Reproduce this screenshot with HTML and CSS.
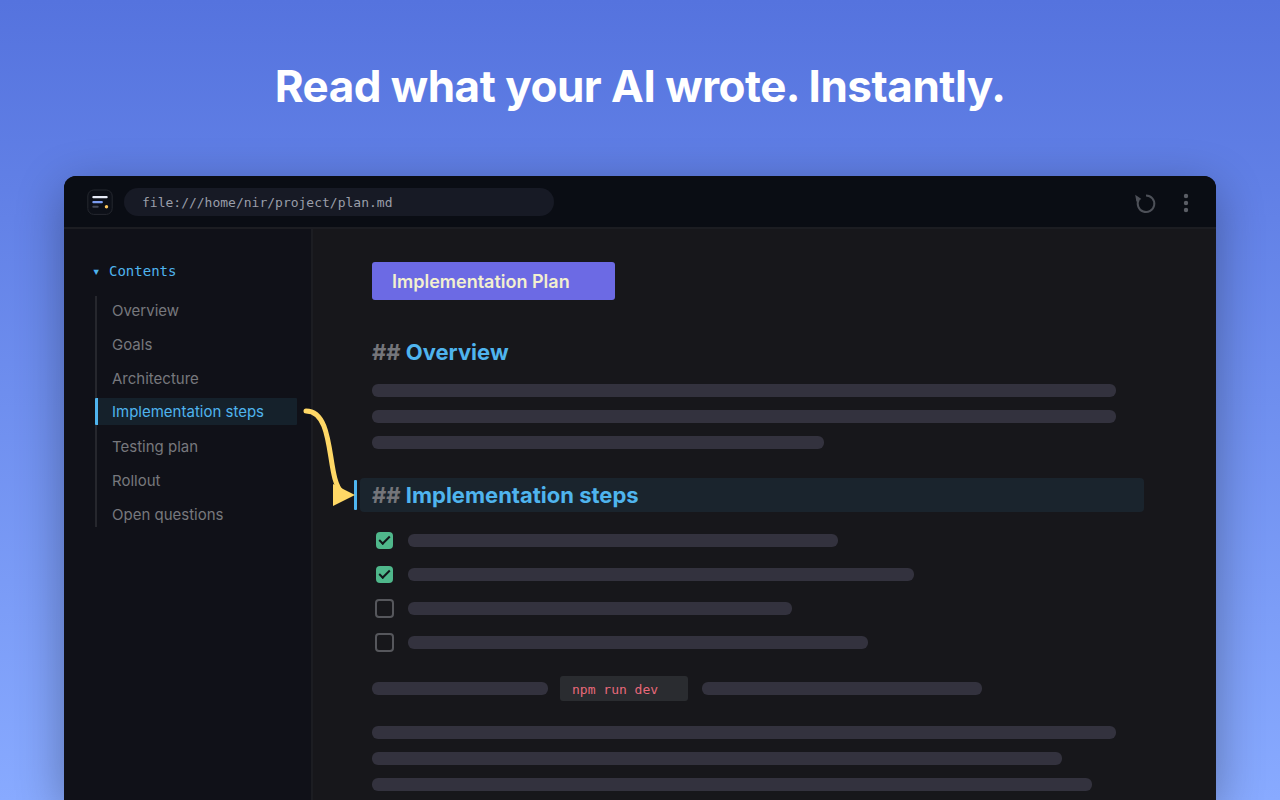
FILE: index.html
```html
<!DOCTYPE html>
<html lang="en">

<head>
    <meta charset="utf-8">
    <title>Read what your AI wrote</title>
    <link rel="stylesheet" href="styles.css">
</head>

<body>
    <h1 class="headline">Read what your AI wrote. Instantly.</h1>
    <div class="window">
        <div class="toolbar">
            <svg class="logo" viewBox="0 0 26 26" width="26" height="26" aria-hidden="true">
                <rect x="0.8" y="1" width="24.4" height="24.4" rx="6" fill="#0d1018" stroke="#25282f" />
                <rect x="5.3" y="7" width="15.4" height="2.2" rx="1" fill="#e8ecf8" />
                <rect x="5.3" y="12" width="10.6" height="2.2" rx="1" fill="#7c9cf0" />
                <rect x="5.3" y="16.8" width="6.4" height="2" rx="1" fill="#454a58" />
                <circle cx="19.5" cy="17.7" r="1.7" fill="#ffc95c" />
            </svg>
            <input type="text" class="address" aria-label="Address" value="file:///home/nir/project/plan.md">
            <button type="button" class="icon-button reload" aria-label="Reload">
                <svg viewBox="0 0 24 24" width="24" height="24">
                    <path d="M12 5.4A8.3 8.3 0 1 1 4.8 9.6" fill="none" stroke="#4d5058" stroke-width="2" />
                    <path d="M1.2 4.8L7.4 9L2.4 11.8Z" fill="#4d5058" />
                </svg>
            </button>
            <button type="button" class="icon-button" aria-label="Menu">
                <svg viewBox="0 0 24 24" width="24" height="24" fill="#5b5e66">
                    <circle cx="12" cy="6" r="2.2" />
                    <circle cx="12" cy="13" r="2.2" />
                    <circle cx="12" cy="20" r="2.2" />
                </svg>
            </button>
        </div>
        <div class="workspace">
            <nav class="sidebar">
                <div class="toc-title"><span class="toc-arrow">▾</span>Contents</div>
                <ul class="toc">
                    <li><a href="#overview">Overview</a></li>
                    <li><a href="#goals">Goals</a></li>
                    <li><a href="#architecture">Architecture</a></li>
                    <li><a href="#steps" class="active">Implementation steps</a></li>
                    <li><a href="#testing">Testing plan</a></li>
                    <li><a href="#rollout">Rollout</a></li>
                    <li><a href="#questions">Open questions</a></li>
                </ul>
            </nav>
            <main class="document">
                <div class="doc-title">Implementation Plan</div>

                <h2 id="overview"><span class="hash">##</span> Overview</h2>
                <div class="paragraph">
                    <div class="bar"></div>
                    <div class="bar"></div>
                    <div class="bar" style="width: 452px"></div>
                </div>

                <h2 id="steps" class="current"><span class="hash">##</span> Implementation steps</h2>
                <ul class="tasks">
                    <li><input type="checkbox" aria-label="Step 1" checked><div class="bar" style="width: 430px"></div></li>
                    <li><input type="checkbox" aria-label="Step 2" checked><div class="bar" style="width: 506px"></div></li>
                    <li><input type="checkbox" aria-label="Step 3"><div class="bar" style="width: 384px"></div></li>
                    <li><input type="checkbox" aria-label="Step 4"><div class="bar" style="width: 460px"></div></li>
                </ul>

                <div class="code-line">
                    <div class="bar" style="width: 176px"></div>
                    <code>npm run dev</code>
                    <div class="bar" style="width: 280px"></div>
                </div>
                <div class="paragraph">
                    <div class="bar"></div>
                    <div class="bar" style="width: 690px"></div>
                    <div class="bar" style="width: 720px"></div>
                </div>
            </main>
            <!-- arrow from the active entry to its heading -->
            <svg class="connector" viewBox="0 0 60 110" width="60" height="110" aria-hidden="true">
                <path d="M6 11C36 11 26 80 42 92" fill="none" stroke="#ffd866" stroke-width="5" stroke-linecap="round" />
                <path d="M33 84L55 95L33 106Z" fill="#ffd866" />
            </svg>
        </div>
    </div>
</body>

</html>
```
FILE: styles.css
```css
*,
*::before {
    box-sizing: border-box;
}

body {
    display: flex;
    flex-direction: column;
    min-height: 100vh;
    margin: 0;
    padding: 0 64px;
    font-family: Inter, sans-serif;
    background: linear-gradient(#5573de, #88aaff);
}

ul {
    list-style: none;
    margin: 0;
    padding: 0;
}

.headline {
    margin: 0;
    padding: 56px 0 60px;
    font-size: 44px;
    line-height: 60px;
    font-weight: 700;
    letter-spacing: -0.5px;
    text-align: center;
    color: #fff;
}

.window {
    display: flex;
    flex-direction: column;
    flex: 1;
    border-radius: 12px 12px 0 0;
    background-color: #17171b;
    box-shadow: 0 12px 48px rgba(0, 0, 0, 0.32);
}

/* toolbar */
.toolbar {
    display: flex;
    align-items: center;
    height: 53px;
    padding: 1px 18px 0 23px;
    border-bottom: 2px solid #1c1d22;
    border-radius: 12px 12px 0 0;
    background-color: #0a0d14;
}

.address {
    width: 430px;
    height: 28px;
    margin: 0 auto 0 11px;
    padding: 1px 18px 0;
    border: none;
    border-radius: 14px;
    background-color: #171a25;
    color: #9a9ea9;
    font-family: "DejaVu Sans Mono", monospace;
    font-size: 13px;
}

.icon-button {
    display: flex;
    padding: 0;
    border: none;
    background: none;
    cursor: pointer;
}

.reload {
    margin-right: 16px;
}

/* sidebar */
.workspace {
    position: relative;
    display: flex;
    flex: 1;
}

.sidebar {
    flex: none;
    width: 249px;
    padding: 32px 14px 0 28px;
    border-right: 2px solid #1c1d22;
    background-color: #101118;
}

.toc-title {
    display: flex;
    margin-bottom: 15px;
    font-family: "DejaVu Sans Mono", monospace;
    font-size: 14px;
    line-height: 20px;
    color: #4fb4ee;
}

.toc-arrow {
    width: 17px;
}

.toc {
    display: flex;
    flex-direction: column;
    gap: 7px;
    margin-left: 3px;
    box-shadow: inset 2px 0 #26272d;
}

.toc a {
    display: block;
    padding: 2px 0 0 17px;
    font-size: 15px;
    line-height: 25px;
    color: #77787d;
    text-decoration: none;
}

.toc a.active {
    padding: 0 0 0 14px;
    border-left: 3px solid #4fb4ee;
    border-radius: 1px;
    background-color: #15212b;
    color: #4fb4ee;
    line-height: 27px;
}

/* document */
.document {
    flex: 1;
    padding: 33px 100px 9px 59px;
}

.doc-title {
    width: 243px;
    padding: 2px 0 0 20px;
    border-radius: 3px;
    background-color: #6c6ae4;
    color: #f3f0cf;
    font-size: 18px;
    line-height: 36px;
    font-weight: 600;
}

h2 {
    position: relative;
    margin: 35px 0 15px;
    font-size: 22px;
    line-height: 34px;
    font-weight: 700;
    color: #4fb4ee;
}

.hash {
    color: #74757a;
}

h2.current {
    margin: 29px -28px 19px -12px;
    padding-left: 12px;
    border-radius: 4px;
    background-color: #1a242d;
}

h2.current::before {
    content: "";
    position: absolute;
    top: 2px;
    bottom: 2px;
    left: -6px;
    width: 3px;
    border-radius: 1px;
    background-color: #4fb4ee;
}

.bar {
    height: 13px;
    max-width: 100%;
    border-radius: 6px;
    background-color: #33323e;
}

.paragraph {
    display: flex;
    flex-direction: column;
    gap: 13px;
}

.tasks {
    display: flex;
    flex-direction: column;
    gap: 15px;
    margin-left: 3px;
}

.tasks li {
    display: flex;
    align-items: center;
    gap: 14px;
}

.tasks input {
    appearance: none;
    position: relative;
    flex: none;
    width: 19px;
    height: 19px;
    margin: 0;
    border: 2px solid #56575c;
    border-radius: 4px;
}

.tasks input:checked {
    width: 17px;
    height: 17px;
    margin: 1px;
    border: none;
    background-color: #4fb78b;
}

.tasks input:checked::before {
    content: "";
    position: absolute;
    top: 4px;
    left: 3px;
    width: 11px;
    height: 6px;
    border: solid #12171a;
    border-width: 0 0 2px 2px;
    transform: rotate(-45deg);
}

.code-line {
    display: flex;
    align-items: center;
    margin: 24px 0 25px;
}

.code-line code {
    width: 128px;
    margin: 0 14px 0 12px;
    padding: 2px 0 0 12px;
    border-radius: 3px;
    background-color: #2a2c30;
    color: #e8697a;
    font-family: "DejaVu Sans Mono", monospace;
    font-size: 13px;
    line-height: 23px;
}

.connector {
    position: absolute;
    top: 171px;
    left: 236px;
}
```
